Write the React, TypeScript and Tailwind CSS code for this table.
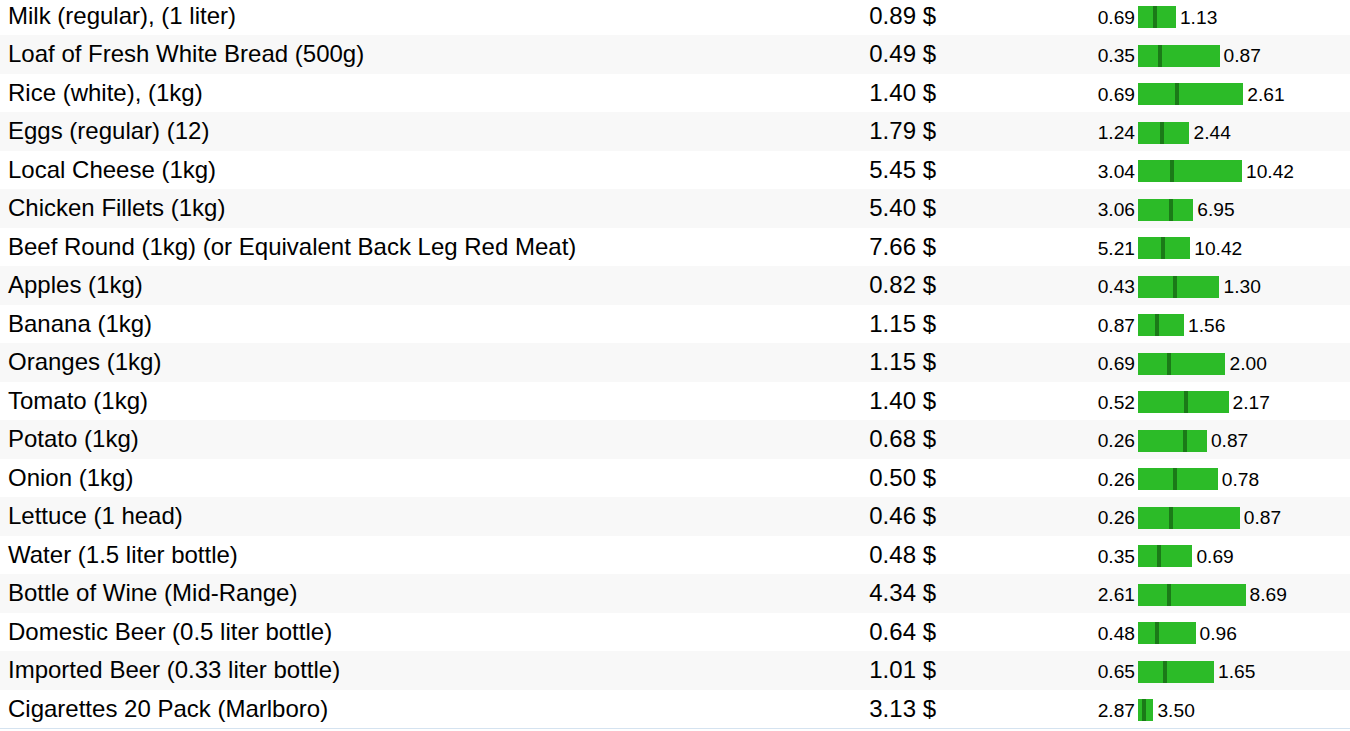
const rows = [
  { name: "Milk (regular), (1 liter)", price: 0.89, min: 0.69, max: 1.13 },
  { name: "Loaf of Fresh White Bread (500g)", price: 0.49, min: 0.35, max: 0.87 },
  { name: "Rice (white), (1kg)", price: 1.4, min: 0.69, max: 2.61 },
  { name: "Eggs (regular) (12)", price: 1.79, min: 1.24, max: 2.44 },
  { name: "Local Cheese (1kg)", price: 5.45, min: 3.04, max: 10.42 },
  { name: "Chicken Fillets (1kg)", price: 5.4, min: 3.06, max: 6.95 },
  { name: "Beef Round (1kg) (or Equivalent Back Leg Red Meat)", price: 7.66, min: 5.21, max: 10.42 },
  { name: "Apples (1kg)", price: 0.82, min: 0.43, max: 1.3 },
  { name: "Banana (1kg)", price: 1.15, min: 0.87, max: 1.56 },
  { name: "Oranges (1kg)", price: 1.15, min: 0.69, max: 2.0 },
  { name: "Tomato (1kg)", price: 1.4, min: 0.52, max: 2.17 },
  { name: "Potato (1kg)", price: 0.68, min: 0.26, max: 0.87 },
  { name: "Onion (1kg)", price: 0.5, min: 0.26, max: 0.78 },
  { name: "Lettuce (1 head)", price: 0.46, min: 0.26, max: 0.87 },
  { name: "Water (1.5 liter bottle)", price: 0.48, min: 0.35, max: 0.69 },
  { name: "Bottle of Wine (Mid-Range)", price: 4.34, min: 2.61, max: 8.69 },
  { name: "Domestic Beer (0.5 liter bottle)", price: 0.64, min: 0.48, max: 0.96 },
  { name: "Imported Beer (0.33 liter bottle)", price: 1.01, min: 0.65, max: 1.65 },
  { name: "Cigarettes 20 Pack (Marlboro)", price: 3.13, min: 2.87, max: 3.5 },
];

// bar width is relative to the average price
const SCALE = 76.8;

function RangeBar({ price, min, max }: { price: number; min: number; max: number }) {
  const width = (SCALE * (max - min)) / price;
  const mark = (SCALE * (price - min)) / price;
  return (
    <div className="flex items-center pt-[3px] text-[19.2px] leading-none">
      <span className="ml-[149px] w-[50px] text-right">{min.toFixed(2)}</span>
      <div className="relative ml-[3px] h-[22px] bg-[#2cbb28]" style={{ width }}>
        <div className="absolute top-0 bottom-0 w-[4px] bg-[#1b7a18]" style={{ left: mark - 2 }} />
      </div>
      <span className="ml-[4px]">{max.toFixed(2)}</span>
    </div>
  );
}

export default function App() {
  return (
    <div className="h-[731px] w-[1350px] overflow-hidden bg-white font-['Liberation_Sans',Arial,sans-serif] text-black">
      <div className="mt-[-3.5px] border-b border-[#d5e3f0]">
        {rows.map((row, i) => (
          <div
            key={row.name}
            className={`flex h-[38.5px] items-center ${i % 2 === 1 ? "bg-[#f8f8f8]" : "bg-white"}`}
          >
            <div className="w-[780px] pl-[8px] text-[24px] leading-none">{row.name}</div>
            <div className="w-[156px] text-right text-[24px] leading-none">{row.price.toFixed(2)} $</div>
            <RangeBar price={row.price} min={row.min} max={row.max} />
          </div>
        ))}
      </div>
    </div>
  );
}
